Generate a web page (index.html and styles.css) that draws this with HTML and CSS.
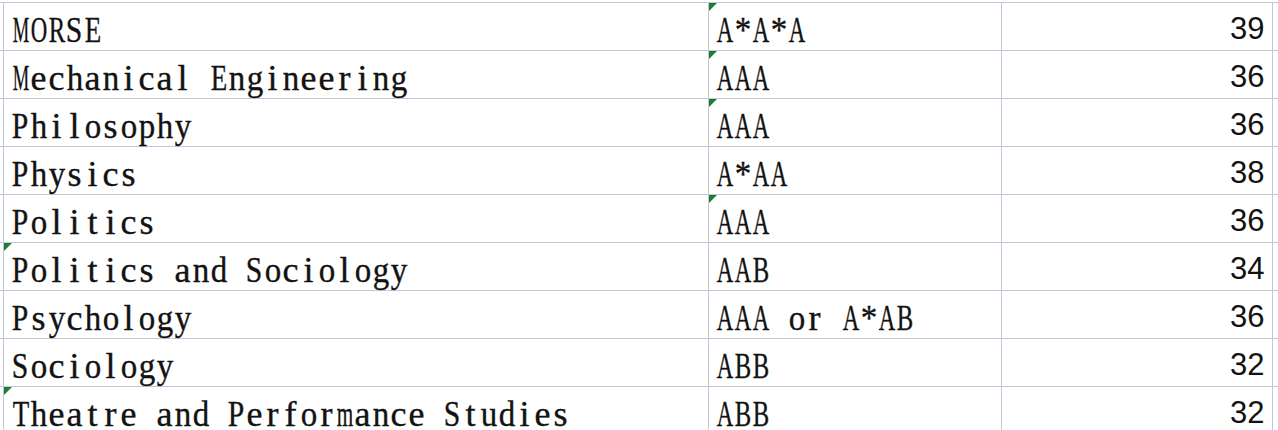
FILE: index.html
```html
<!DOCTYPE html>
<html>
<head>
<meta charset="utf-8">
<link rel="stylesheet" href="styles.css">
</head>
<body>
<div class="sheet">
<table class="grid">
<colgroup>
<col class="c-pre"><col class="c-a"><col class="c-b"><col class="c-c"><col class="c-post">
</colgroup>
<tbody>
<tr><td class="pre"></td><td class="txt">MORSE</td><td class="txt colb flag">A*A*A</td><td class="num">39</td><td></td></tr>
<tr><td class="pre"></td><td class="txt">Mechanical Engineering</td><td class="txt colb flag">AAA</td><td class="num">36</td><td></td></tr>
<tr><td class="pre"></td><td class="txt">Philosophy</td><td class="txt colb flag">AAA</td><td class="num">36</td><td></td></tr>
<tr><td class="pre"></td><td class="txt">Physics</td><td class="txt colb">A*AA</td><td class="num">38</td><td></td></tr>
<tr><td class="pre"></td><td class="txt">Politics</td><td class="txt colb flag">AAA</td><td class="num">36</td><td></td></tr>
<tr><td class="pre"></td><td class="txt flag">Politics and Sociology</td><td class="txt colb">AAB</td><td class="num">34</td><td></td></tr>
<tr><td class="pre"></td><td class="txt">Psychology</td><td class="txt colb">AAA or A*AB</td><td class="num">36</td><td></td></tr>
<tr><td class="pre"></td><td class="txt">Sociology</td><td class="txt colb">ABB</td><td class="num">32</td><td></td></tr>
<tr><td class="pre"></td><td class="txt flag">Theatre and Performance Studies</td><td class="txt colb">ABB</td><td class="num">32</td><td></td></tr>
</tbody>
</table>
</div>
<script src="script.js"></script>
</body>
</html>
```
FILE: styles.css
```css
html, body {
  margin: 0;
  padding: 0;
  background: #ffffff;
}
.sheet {
  width: 1278px;
  height: 430px;
  overflow: hidden;
  padding-top: 2px;
  box-sizing: border-box;
}
.grid {
  border-collapse: collapse;
  table-layout: fixed;
  width: 1290px;
}
.c-pre { width: 3px; }
.c-a { width: 705px; }
.c-b { width: 293px; }
.c-c { width: 271px; }
.c-post { width: 18px; }
.grid td {
  border: 1px solid #c3c6da;
  height: 47px;
  padding: 0;
  box-sizing: border-box;
  position: relative;
  white-space: nowrap;
  overflow: visible;
  vertical-align: top;
  color: #121212;
}
.grid td.pre {
  border-left: none;
}
.txt {
  font-family: "Liberation Serif", "Times New Roman", serif;
  font-size: 36px;
  line-height: 40px;
  padding-top: 7px !important;
  padding-left: 8px !important;
  -webkit-text-stroke: 0.35px #121212;
}
.colb {
  padding-left: 7px !important;
}
.ch {
  display: inline-flex;
  justify-content: center;
  width: 18px;
  white-space: pre;
}
.g {
  display: inline-block;
  transform-origin: 50% 50%;
}
.num {
  font-family: "Liberation Sans", Arial, sans-serif;
  font-size: 31px;
  line-height: 34px;
  text-align: right;
  padding-top: 9px !important;
  padding-right: 7px !important;
}
.flag::before {
  content: "";
  position: absolute;
  left: 0;
  top: 0;
  width: 0;
  height: 0;
  border-top: 8px solid #1f7a33;
  border-right: 8px solid transparent;
}
```
FILE: script.js
```js
document.querySelectorAll('.txt').forEach(function (cell) {
  var text = cell.textContent;
  cell.textContent = '';
  var glyphs = [];
  for (var i = 0; i < text.length; i++) {
    var ch = document.createElement('span');
    ch.className = 'ch';
    var g = document.createElement('span');
    g.className = 'g';
    g.textContent = text[i] === ' ' ? '\u00a0' : text[i];
    ch.appendChild(g);
    cell.appendChild(ch);
    glyphs.push(g);
  }
  glyphs.forEach(function (g) {
    var w = g.getBoundingClientRect().width;
    if (w > 0) {
      var s = Math.min(1.0, 16.5 / w);
      g.style.transform = 'scaleX(' + s.toFixed(3) + ')';
    }
  });
});
```
